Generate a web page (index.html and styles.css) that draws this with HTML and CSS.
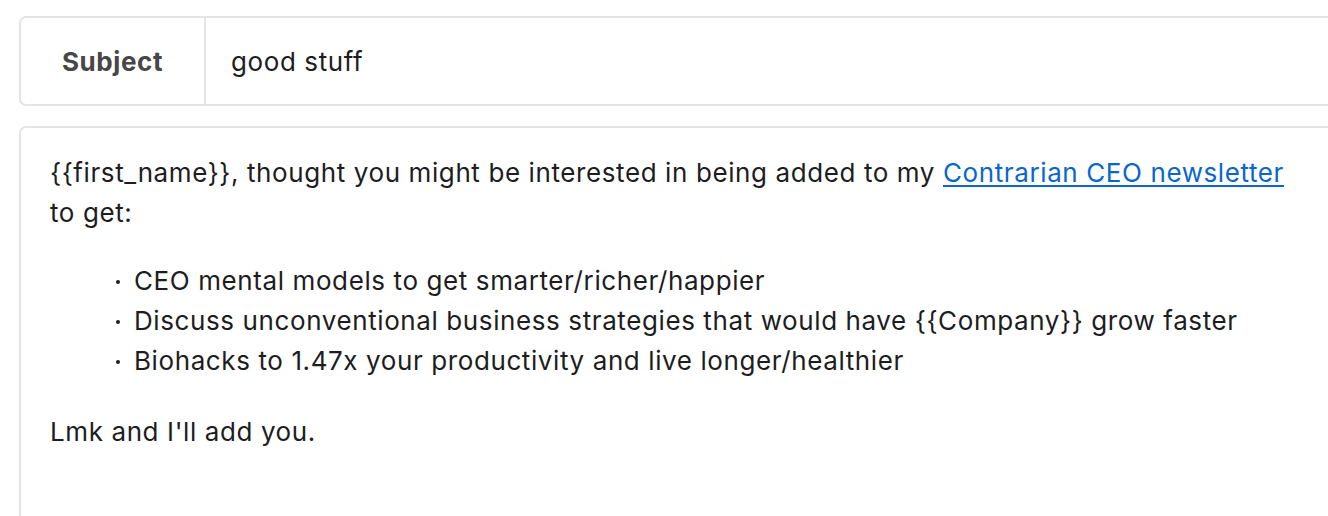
FILE: index.html
```html
<!DOCTYPE html>
<html>
<head>
<meta charset="utf-8">
<link rel="stylesheet" href="styles.css">
</head>
<body>
<div class="page">
  <div class="subject-box">
    <div class="subject-label">Subject</div>
    <div class="subject-value">good stuff</div>
  </div>
  <div class="body-box">
    <p>{{first_name}}, thought you might be interested in being added to my <a href="#">Contrarian CEO newsletter</a> to get:</p>
    <ul>
      <li>CEO mental models to get smarter/richer/happier</li>
      <li>Discuss unconventional business strategies that would have {{Company}} grow faster</li>
      <li>Biohacks to 1.47x your productivity and live longer/healthier</li>
    </ul>
    <p>Lmk and I'll add you.</p>
  </div>
</div>
</body>
</html>
```
FILE: styles.css
```css
html, body {
  margin: 0;
  padding: 0;
  background: #ffffff;
  overflow: hidden;
}
body {
  font-family: Inter, "Noto Sans", sans-serif;
  color: #1d1d1f;
  letter-spacing: 0.6px;
}
.page {
  width: 1340px;
  padding: 16px 0 0 19px;
  display: flex;
  flex-direction: column;
  gap: 20px;
}
.subject-box {
  display: flex;
  height: 86px;
  border: 2px solid #e4e4e4;
  border-radius: 7px;
}
.subject-label {
  width: 183px;
  border-right: 2px solid #e4e4e4;
  display: flex;
  align-items: center;
  justify-content: center;
  font-size: 26px;
  font-weight: 700;
  color: #474747;
}
.subject-value {
  display: flex;
  align-items: center;
  padding-left: 25px;
  font-size: 26px;
}
.body-box {
  border: 2px solid #e4e4e4;
  border-radius: 7px;
  padding: 25px 30px 60px 29px;
  font-size: 26px;
  line-height: 40px;
  height: 400px;
}
.body-box p {
  margin: 0;
  width: 1250px;
}
.body-box ul {
  margin: 28px 0 31px 0;
  padding: 0 0 0 84px;
  list-style: none;
}
.body-box li {
  position: relative;
}
.body-box li::before {
  content: "";
  position: absolute;
  left: -18px;
  top: 19px;
  width: 4px;
  height: 4px;
  border-radius: 50%;
  background: #1d1d1f;
}
a {
  color: #0a66cc;
  text-decoration: underline;
  text-underline-offset: 3px;
}
```
